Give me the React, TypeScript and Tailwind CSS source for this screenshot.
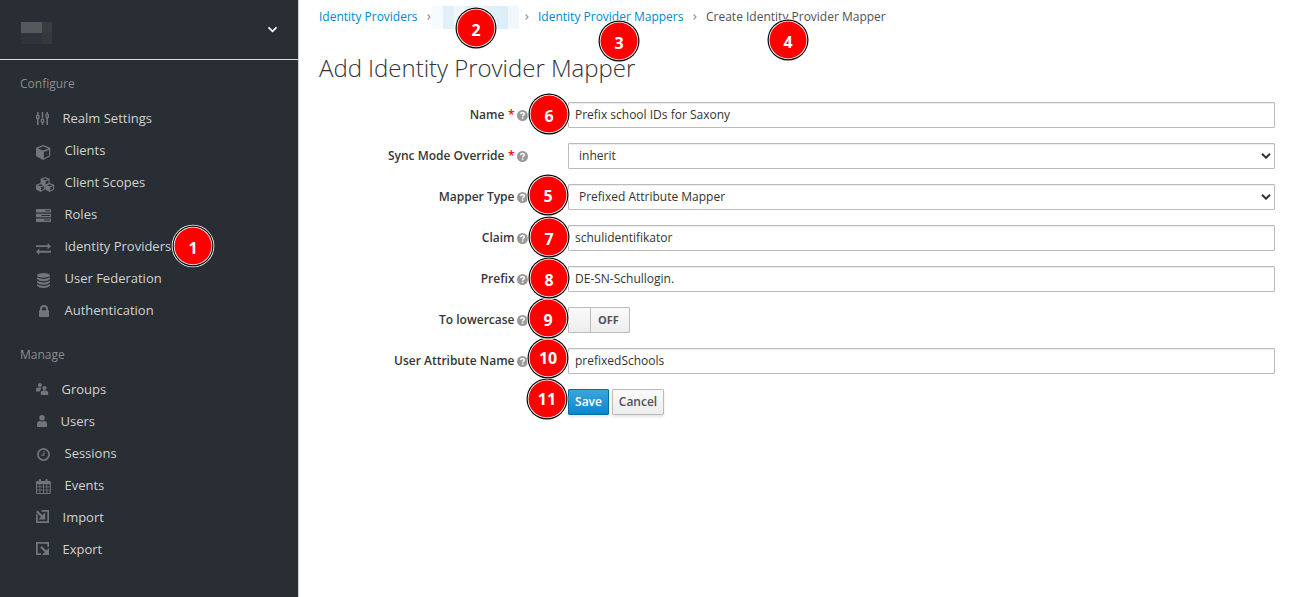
import type { ReactNode } from "react";

const Cube = () => (
  <path fillRule="evenodd" d="M7.3.1 13.6 2.400Q14.300 2.700 14.300 3.500V10.500Q14.300 11.200 13.700 11.500L7.700 14.800Q7.100 15.100 6.600 14.800L.6 11.500Q0 11.200 0 10.500V3.500Q0 2.700.7 2.400L7 .1ZM7.150 1.400 1.800 3.450 7.150 5.400 12.500 3.450ZM7.900 6.900V13.200L13.100 10.400V4.950Z" />
);

const MiniCube = () => (
  <path fillRule="evenodd" d="M4.500 0 9 1.800V6.500L4.500 9 0 6.500V1.800ZM4.500 1.200 1.800 2.200 4.500 3.200 7.200 2.200ZM5.100 4.300V7.500L7.900 6V3.200Z" />
);

const icons: Record<string, ReactNode> = {
  sliders: (
    <g>
      <path d="M1 0h1.600v3.200H1zM1 7h1.600v6H1zM5.700 0h1.600v6.800H5.700zM5.700 10.600h1.600V13H5.700zM10.400 0H12v2.200h-1.600zM10.400 6H12v7h-1.600z" />
      <path d="M0 3h3.600v3.500L1.800 8 0 6.500zM4.700 7h3.600v3L6.500 11.500 4.700 10zM9.400 2H13v3.500L11.200 7 9.400 5.500z" />
      <path d="M1.300 4h1v1.700h-1zM6 8h1v1.500H6zM10.700 3h1v1.700h-1z" fill="#292e34" />
    </g>
  ),
  cube: <Cube />,
  cubes: (
    <g>
      <g transform="translate(4.600 0)"><MiniCube /></g>
      <g transform="translate(0 6)"><MiniCube /></g>
      <g transform="translate(9.200 6)"><MiniCube /></g>
    </g>
  ),
  tasks: (
    <path fillRule="evenodd" d="M0 0h15v3.500H0zM9 1.200v1h5v-1zM0 4.700h15v3.500H0zM5.500 5.900v1H14v-1zM0 9.400h15v3.500H0zM8 10.600v1h6v-1z" />
  ),
  exchange: (
    <path d="M0 2.300h11.700V0L15 3.200l-3.300 3.100V4.100H0zM15 7.800H3.300V5.600L0 8.800 3.300 12V9.700H15z" />
  ),
  database: (
    <g>
      <ellipse cx="6.500" cy="2.400" rx="6.500" ry="2.400" />
      <path d="M0 4.300Q3 6 6.500 6T13 4.300V6Q11 8.200 6.500 8.200T0 6zM0 7.800Q3 9.500 6.500 9.500T13 7.800V9.500Q11 11.700 6.500 11.700T0 9.500zM0 11.300Q3 13 6.500 13T13 11.300V12.700Q11 15 6.500 15T0 12.700z" />
    </g>
  ),
  lock: (
    <path fillRule="evenodd" d="M1 5.200V4a4 4 0 0 1 8 0v1.200h.2q.8 0 .8.800v5.200q0 .8-.8.800H.8q-.8 0-.8-.8V6q0-.8.8-.8zm1.900 0h4.200V4a2.100 2.100 0 0 0-4.200 0z" />
  ),
  groups: (
    <g>
      <circle cx="3.900" cy="2" r="2" />
      <path d="M0 8.500V6.200Q.2 4.700 2 4.500h2.500l1 .5q-1 1-1.200 2.600L3.500 8.500z" />
      <circle cx="8.500" cy="5" r="2" />
      <path d="M4.800 12V9.600Q5 7.800 6.700 7.500h3.600q1.600.3 1.800 2V12z" />
    </g>
  ),
  user: (
    <g>
      <circle cx="5" cy="2.800" r="2.800" />
      <path d="M0 12V9.500Q0 6.400 2.500 6q2.500 1 5 0Q10 6.400 10 9.500V12z" />
    </g>
  ),
  clock: (
    <g fill="none" stroke="currentColor">
      <circle cx="6.500" cy="6.500" r="5.600" strokeWidth="1.700" />
      <path d="M6.900 3.200v3.900H4.200" strokeWidth="1.100" />
    </g>
  ),
  calendar: (
    <path fillRule="evenodd" d="M1 2h1.900V1q0-1 1.100-1t1.100 1v1h4.300V1q0-1 1.100-1t1.100 1v1H14q.8 0 .8.900V14q0 1-.8 1H.9Q0 15 0 14V2.900Q0 2 1 2M1 5.300v2.200h2.500V5.300zm3.300 0v2.200h2.700V5.300zm3.500 0v2.200h2.700V5.300zm3.500 0v2.200h2.500V5.300zM1 8.300v2.400h2.500V8.300zm3.300 0v2.400h2.700V8.300zm3.500 0v2.400h2.700V8.300zm3.500 0v2.400h2.500V8.300zM1 11.500V14h2.500v-2.500zm3.300 0V14h2.700v-2.500zm3.500 0V14h2.700v-2.500zm3.500 0V14h2.500v-2.500z" />
  ),
  import: (
    <g>
      <path d="M5.500 0H13v13H0V4.500h1.700v6.800h9.600V1.700H5.500z" />
      <path d="M0 2.200 1.600.6l4.700 4.600 2.900-2.700v6.900H2.500l2.400-2.600z" />
    </g>
  ),
  export: (
    <g>
      <path d="M0 0h13v5h-1.700V1.700H1.700v9.600H5V13H0z" />
      <path d="M4.200 5.600 5.800 4l4.500 4.400L13 6v7H6l2.700-2.900z" />
    </g>
  ),
};

type Item = { label: string; icon: string; box: string; gap: string; w: number; h: number };

const configure: Item[] = [
  { label: "Realm Settings", icon: "sliders", box: "w-[26.500px]", gap: "pb-[2px]", w: 13, h: 13 },
  { label: "Clients", icon: "cube", box: "w-[28.500px]", gap: "pt-[3px]", w: 15, h: 15 },
  { label: "Client Scopes", icon: "cubes", box: "w-[28.500px]", gap: "pt-[3px]", w: 18.5, h: 15 },
  { label: "Roles", icon: "tasks", box: "w-[28.500px]", gap: "pt-px", w: 15, h: 13 },
  { label: "Identity Providers", icon: "exchange", box: "w-[28.400px]", gap: "pt-[4px]", w: 15, h: 12 },
  { label: "User Federation", icon: "database", box: "pl-px w-[28.500px]", gap: "pt-[3px]", w: 13, h: 15 },
  { label: "Authentication", icon: "lock", box: "pl-[2.500px] w-[28.500px]", gap: "pt-0", w: 10, h: 12 },
];

const manage: Item[] = [
  { label: "Groups", icon: "groups", box: "w-[25.500px]", gap: "pb-[2px]", w: 12.5, h: 12 },
  { label: "Users", icon: "user", box: "pl-[0.500px] w-[24.500px]", gap: "pb-[2px]", w: 10, h: 12 },
  { label: "Sessions", icon: "clock", box: "pl-px w-[28.500px]", gap: "pt-px", w: 13, h: 13 },
  { label: "Events", icon: "calendar", box: "w-[28.500px]", gap: "pt-px", w: 15, h: 15 },
  { label: "Import", icon: "import", box: "w-[26.500px]", gap: "pb-[3px]", w: 13, h: 13 },
  { label: "Export", icon: "export", box: "w-[26.500px]", gap: "pb-[3px]", w: 13, h: 13 },
];

function NavList({ items }: { items: Item[] }) {
  return (
    <ul className="pl-9">
      {items.map((it) => (
        <li key={it.label} className="flex h-8 items-center text-[13px] text-[#d1d1d1]">
          <span className={`flex shrink-0 text-[#72767b] ${it.box} ${it.gap}`}>
            <svg width={it.w} height={it.h} viewBox={`0 0 ${it.w} ${it.h}`} fill="currentColor" className="shrink-0">
              {icons[it.icon]}
            </svg>
          </span>
          <a>{it.label}</a>
        </li>
      ))}
    </ul>
  );
}

function Help() {
  return (
    <svg width="11" height="11" viewBox="0 0 10 10" className="ml-[2.500px] shrink-0">
      <circle cx="5" cy="5" r="5" fill="#999" />
      <path d="M3.300 3.800Q3.500 2.300 5 2.300T6.700 3.700C6.700 4.700 5.100 4.700 5.100 6" fill="none" stroke="#fff" strokeWidth="1.300" />
      <path d="M4.400 6.700h1.400V8H4.400z" fill="#fff" />
    </svg>
  );
}

function Row({ label, required, children }: { label: string; required?: boolean; children: ReactNode }) {
  return (
    <div className="flex h-[26px] items-center">
      <label className="flex w-[209px] shrink-0 items-center justify-end text-[12px] font-semibold text-[#363636]">
        {label}
        {required && <span className="ml-[3.500px] text-[#f00]">*</span>}
        <Help />
      </label>
      <div className="ml-10 flex flex-1">{children}</div>
    </div>
  );
}

function TextBox({ value }: { value: string }) {
  return (
    <div className="flex h-[26px] flex-1 items-center border border-[#bbb] pl-1.5 text-[12px] text-[#333] rounded-[1px] shadow-[inset_0_1px_1px_rgba(0,0,0,0.075)]">
      {value}
    </div>
  );
}

function SelectBox({ value }: { value: string }) {
  return (
    <div className="flex h-[26px] flex-1 items-center justify-between rounded-[1px] border border-[#bbb] pl-2.5 pr-[3px] text-[12px] text-[#333] shadow-[inset_0_1px_1px_rgba(0,0,0,0.075)]">
      {value}
      <svg width="10" height="6" viewBox="0 0 10 6" fill="none" stroke="#333" strokeWidth="2">
        <path d="m1 .8 4 3.900 4-3.900" />
      </svg>
    </div>
  );
}

const badges = [
  { n: 1, x: 193.2, y: 246, pad: "pt-[3px]" },
  { n: 2, x: 476, y: 28, pad: "pt-[3px]" },
  { n: 3, x: 619, y: 41.2, pad: "pt-[2px]" },
  { n: 4, x: 788, y: 40, pad: "pt-[3px]" },
  { n: 11, x: 547, y: 398.8, pad: "pt-0" },
  { n: 10, x: 548.1, y: 357.8, pad: "pt-0" },
  { n: 9, x: 548.1, y: 317.8, pad: "pt-[3px]" },
  { n: 8, x: 549.1, y: 277.8, pad: "pt-[3px]" },
  { n: 7, x: 549.1, y: 236.8, pad: "pt-[3px]" },
  { n: 5, x: 548.1, y: 194.8, pad: "pt-[2px]" },
  { n: 6, x: 549.1, y: 113.9, pad: "pt-[3px]" },
];

function Badge({ n, x, y, pad }: { n: number; x: number; y: number; pad: string }) {
  return (
    <div
      className={`absolute flex h-[37px] w-[37px] -translate-x-1/2 -translate-y-1/2 items-center justify-center rounded-full bg-[#f00] text-[16px] font-bold leading-none text-white shadow-[0_0_0_0.800px_#fff,0_0_0_2px_#000,0_0_0_2.800px_#fff] ${pad}`}
      style={{ left: x, top: y }}
    >
      {n}
    </div>
  );
}

function Separator({ className }: { className: string }) {
  return (
    <svg width="4" height="6" viewBox="0 0 4 6" fill="none" stroke="#9c9c9c" strokeWidth="1.200" className={className}>
      <path d="m.6.5 2.400 2.500-2.400 2.500" />
    </svg>
  );
}

export default function App() {
  return (
    <div className="relative flex h-[597px] w-[1292px] overflow-hidden bg-white font-['Open_Sans',sans-serif]">
      <aside className="w-[299px] shrink-0 border-r border-[#d1d1d1] bg-[#292e34]">
        <div className="flex h-[60px] items-start justify-between border-b border-[#dcdcdc] pl-[21px] pr-[20px] pt-[22px]">
          <div className="grid grid-cols-[21px_10px] grid-rows-[11px_11px]">
            <span className="bg-[#55585c]" />
            <span className="bg-[#383c3f]" />
            <span className="bg-[#30333a]" />
            <span className="bg-[#36393c]" />
          </div>
          <svg width="11" height="8" viewBox="0 0 11 8" fill="none" stroke="#fff" strokeWidth="1.600" className="mt-[4px]">
            <path d="m1.500 1.400 4 4 4-4" />
          </svg>
        </div>
        <h2 className="mt-[15px] pl-5 text-[12px] leading-[18px] text-[#8b8d8f]">Configure</h2>
        <div className="mt-[10px]"><NavList items={configure} /></div>
        <h2 className="mt-[19px] pl-5 text-[12px] leading-[18px] text-[#8b8d8f]">Manage</h2>
        <div className="mt-[10px]"><NavList items={manage} /></div>
      </aside>

      <main className="flex-1 pl-5 pr-[17px]">
        <nav className="flex h-[33px] items-center text-[12px] text-[#0088ce]">
          <a className="w-[98px] whitespace-nowrap">Identity Providers</a>
          <Separator className="ml-[10px] mt-px" />
          <span className="ml-[1px] flex h-[23px] w-[87px] self-start mt-[6px]">
            <span className="w-[11px] bg-[#f6fbfe]" />
            <span className="w-[11px] bg-[#e2f0f9]" />
            <span className="w-[11px] bg-[#eff7fc]" />
            <span className="w-[11px] bg-[#dceef8]" />
            <span className="w-[11px] bg-[#eaf5fb]" />
            <span className="w-[10px] bg-[#e0f0f9]" />
            <span className="w-[11px] bg-[#dceef8]" />
            <span className="w-[11px] bg-[#f0f8fc]" />
          </span>
          <Separator className="ml-[6px] mt-px" />
          <a className="ml-[9px] w-[145px] whitespace-nowrap">Identity Provider Mappers</a>
          <Separator className="ml-[10px] mt-px" />
          <span className="ml-[9px] text-[#4d5258]">Create Identity Provider Mapper</span>
        </nav>
        <h1 className="mt-[18px] text-[24px] font-light leading-[33px] tracking-[-0.03px] text-[#333]">Add Identity Provider Mapper</h1>

        <form className="mt-[18px] flex flex-col gap-[15px]">
          <Row label="Name" required><TextBox value="Prefix school IDs for Saxony" /></Row>
          <Row label="Sync Mode Override" required><SelectBox value="inherit" /></Row>
          <Row label="Mapper Type"><SelectBox value="Prefixed Attribute Mapper" /></Row>
          <Row label="Claim"><TextBox value="schulidentifikator" /></Row>
          <Row label="Prefix"><TextBox value="DE-SN-Schullogin." /></Row>
          <Row label="To lowercase">
            <div className="flex h-[26px] w-[62px] rounded-[1px] border border-[#bbb] bg-linear-to-b from-[#fafafa] to-[#ededed] text-[11px] font-bold text-[#4d5258]">
              <span className="w-[22px] border-r border-[#bbb]" />
              <span className="flex flex-1 items-center justify-center pr-[3px]">OFF</span>
            </div>
          </Row>
          <Row label="User Attribute Name"><TextBox value="prefixedSchools" /></Row>
          <div className="flex gap-[3px] pl-[249px] text-[12px] font-semibold">
            <button type="button" className="h-[26px] w-[41px] rounded-[1px] border border-[#006e9c] bg-linear-to-b from-[#39a5dc] to-[#0088ce] text-white shadow-[0_2px_3px_rgba(3,3,3,0.1)]">Save</button>
            <button type="button" className="h-[26px] w-[52px] rounded-[1px] border border-[#bbb] bg-linear-to-b from-[#fafafa] to-[#ededed] text-[#4d5258] shadow-[0_2px_3px_rgba(3,3,3,0.1)]">Cancel</button>
          </div>
        </form>
      </main>

      {badges.map((b) => (
        <Badge key={b.n} n={b.n} x={b.x} y={b.y} pad={b.pad} />
      ))}
    </div>
  );
}
